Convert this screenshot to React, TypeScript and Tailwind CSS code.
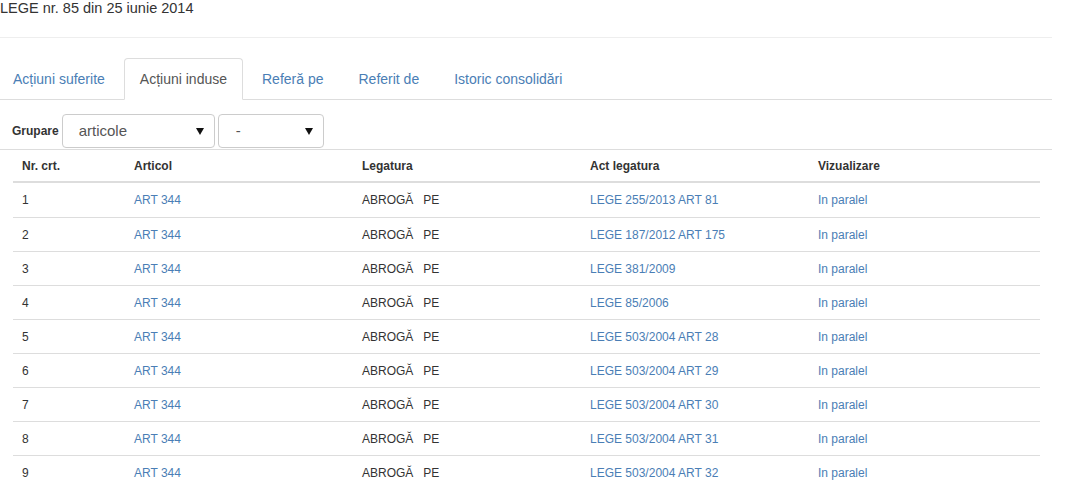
const ROWS = [
  { nr: 1, act: "LEGE 255/2013 ART 81" },
  { nr: 2, act: "LEGE 187/2012 ART 175" },
  { nr: 3, act: "LEGE 381/2009" },
  { nr: 4, act: "LEGE 85/2006" },
  { nr: 5, act: "LEGE 503/2004 ART 28" },
  { nr: 6, act: "LEGE 503/2004 ART 29" },
  { nr: 7, act: "LEGE 503/2004 ART 30" },
  { nr: 8, act: "LEGE 503/2004 ART 31" },
  { nr: 9, act: "LEGE 503/2004 ART 32" },
];

const TABS = ["Acțiuni suferite", "Acțiuni induse", "Referă pe", "Referit de", "Istoric consolidări"];

const COLS = "grid grid-cols-[112px_228px_228px_228px_1fr]";

function Select({ value, width, textPad }: { value: string; width: string; textPad: string }) {
  return (
    <div className={`${width} h-[34px] flex items-center justify-between border border-[#ccc] rounded-[4px] bg-white pr-[10px] ${textPad}`}>
      <span className="text-[15px] text-[#555]">{value}</span>
      <svg width="8" height="7" viewBox="0 0 8 7">
        <path d="M0 0 L8 0 L4 7 Z" fill="#111" />
      </svg>
    </div>
  );
}

export default function App() {
  return (
    <div className="w-[1071px] h-[483px] overflow-hidden bg-white text-[#333]" style={{ fontFamily: '"Liberation Sans", Arial, sans-serif' }}>
      <div className="h-[37px] text-[14.5px] leading-[16px]">LEGE nr. 85 din 25 iunie 2014</div>
      <div className="w-[1052px] border-t border-[#eee]" />

      {/* Tabs */}
      <div className="w-[1052px] mt-[20px] border-b border-[#ddd] flex h-[42px]">
        <div className="flex ml-[-3px]">
          {TABS.map((t, i) => (
            <div
              key={t}
              className={
                i === 1
                  ? "h-[42px] px-[15px] mr-[3px] flex items-center text-[14px] border border-[#ddd] border-b-white rounded-t-[4px] bg-white text-[#555]"
                  : "h-[42px] px-[15px] mr-[3px] flex items-center text-[14px] border border-transparent text-[#4a7eb5]"
              }
            >
              {t}
            </div>
          ))}
        </div>
      </div>

      {/* Grupare */}
      <div className="flex items-center pl-[12px] mt-[14px] h-[34px]">
        <span className="text-[12px] font-bold mr-[3px]">Grupare</span>
        <Select value="articole" width="w-[153px]" textPad="pl-[16px]" />
        <div className="w-[3px]" />
        <Select value="-" width="w-[106px]" textPad="pl-[17px]" />
      </div>

      <div className="w-[1052px] border-t border-[#ddd] mt-px" />

      {/* Table */}
      <div className="ml-[13px] w-[1027px] text-[12px]">
        <div className={`${COLS} h-[33px] items-center font-bold border-b-2 border-[#ddd]`}>
          <div className="pl-[9px]">Nr. crt.</div>
          <div className="pl-[9px]">Articol</div>
          <div className="pl-[9px]">Legatura</div>
          <div className="pl-[9px]">Act legatura</div>
          <div className="pl-[9px]">Vizualizare</div>
        </div>
        {ROWS.map((r, i) => (
          <div key={r.nr} className={`${COLS} h-[34px] items-center ${i > 0 ? "border-t border-[#ddd]" : ""}`}>
            <div className="pl-[9px]">{r.nr}</div>
            <div className="pl-[9px] text-[#4a7eb5]">ART 344</div>
            <div className="pl-[9px] whitespace-pre">ABROGĂ   PE</div>
            <div className="pl-[9px] text-[#4a7eb5]">{r.act}</div>
            <div className="pl-[9px] text-[#4a7eb5]">In paralel</div>
          </div>
        ))}
      </div>
    </div>
  );
}
